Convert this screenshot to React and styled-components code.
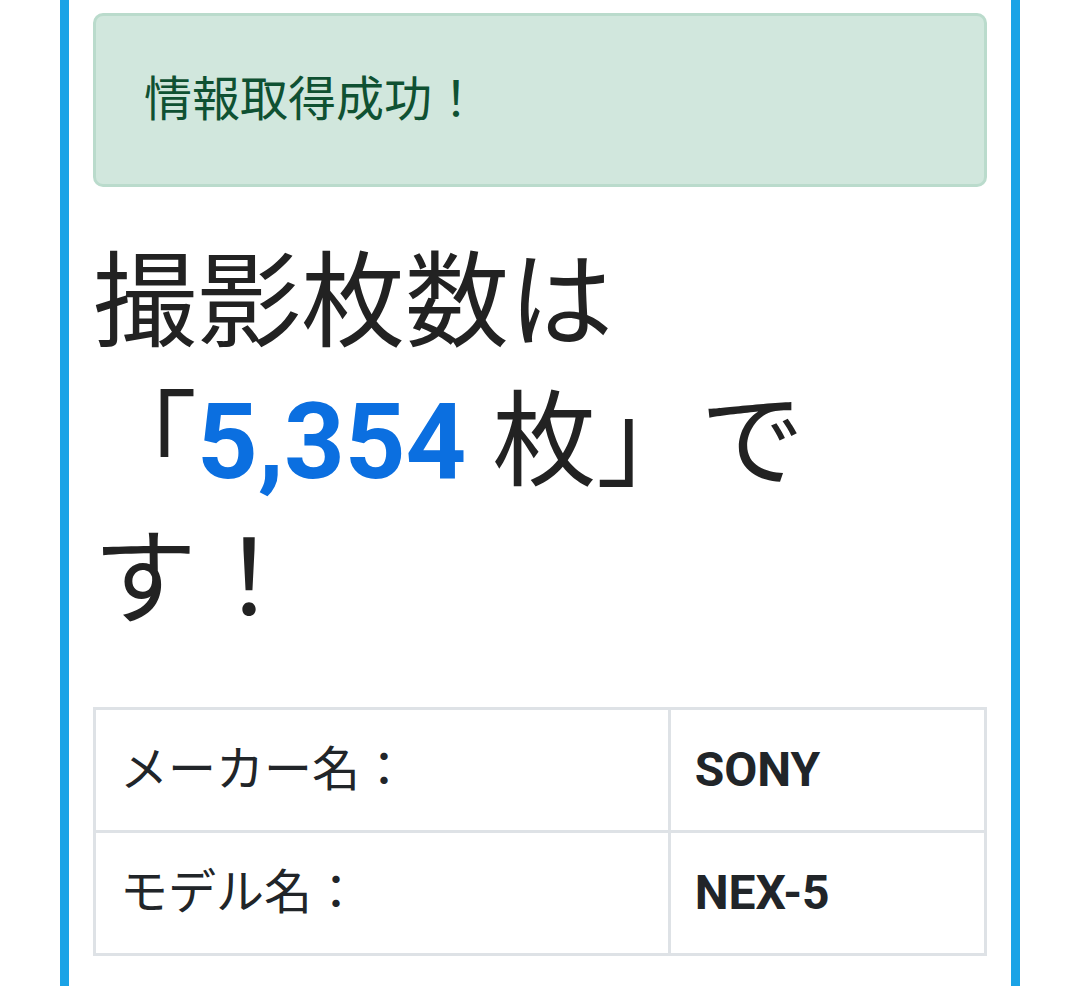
import React from 'react';
import styled, { createGlobalStyle } from 'styled-components';

const GlobalStyle = createGlobalStyle`
  html, body {
    margin: 0;
    padding: 0;
    background: #fff;
  }
  body {
    font-family: Roboto, "Noto Sans CJK JP", "Noto Sans", sans-serif;
    color: #212529;
  }
`;

const Frame = styled.div`
  box-sizing: border-box;
  min-height: 100vh;
  margin: 0 60px;
  padding: 13px 24px 0;
  border-left: 9px solid #1ba3e6;
  border-right: 9px solid #1ba3e6;
`;

const Alert = styled.div`
  padding: 48px;
  margin-bottom: 48px;
  border: 3px solid #badbcc;
  border-radius: 10px;
  background: #d1e7dd;
  color: #0f5132;
  font-size: 48px;
  line-height: 72px;
`;

const Heading = styled.h1`
  max-width: 790px;
  margin: 0 0 57px;
  font-size: 104px;
  line-height: 138px;
  font-weight: 400;
  color: #222;
`;

const Count = styled.span`
  color: #0b6fe0;
  font-size: 106px;
  font-weight: 700;
`;

const InfoTable = styled.table`
  width: 100%;
  border-collapse: collapse;
  font-size: 48px;
  line-height: 72px;
  color: #212529;
`;

const Cell = styled.td`
  padding: 24px;
  border: 3px solid #dee2e6;
  width: ${(p) => (p.$label ? '64.5%' : 'auto')};
  font-weight: ${(p) => (p.$label ? 400 : 700)};
`;

const rows = [
  { label: 'メーカー名：', value: 'SONY' },
  { label: 'モデル名：', value: 'NEX-5' },
];

export default function App() {
  return (
    <>
      <GlobalStyle />
      <Frame>
        <Alert>情報取得成功！</Alert>
        <Heading>
          撮影枚数は「<Count>5,354</Count> 枚」です！
        </Heading>
        <InfoTable>
          <tbody>
            {rows.map((row) => (
              <tr key={row.label}>
                <Cell $label>{row.label}</Cell>
                <Cell>{row.value}</Cell>
              </tr>
            ))}
          </tbody>
        </InfoTable>
      </Frame>
    </>
  );
}
